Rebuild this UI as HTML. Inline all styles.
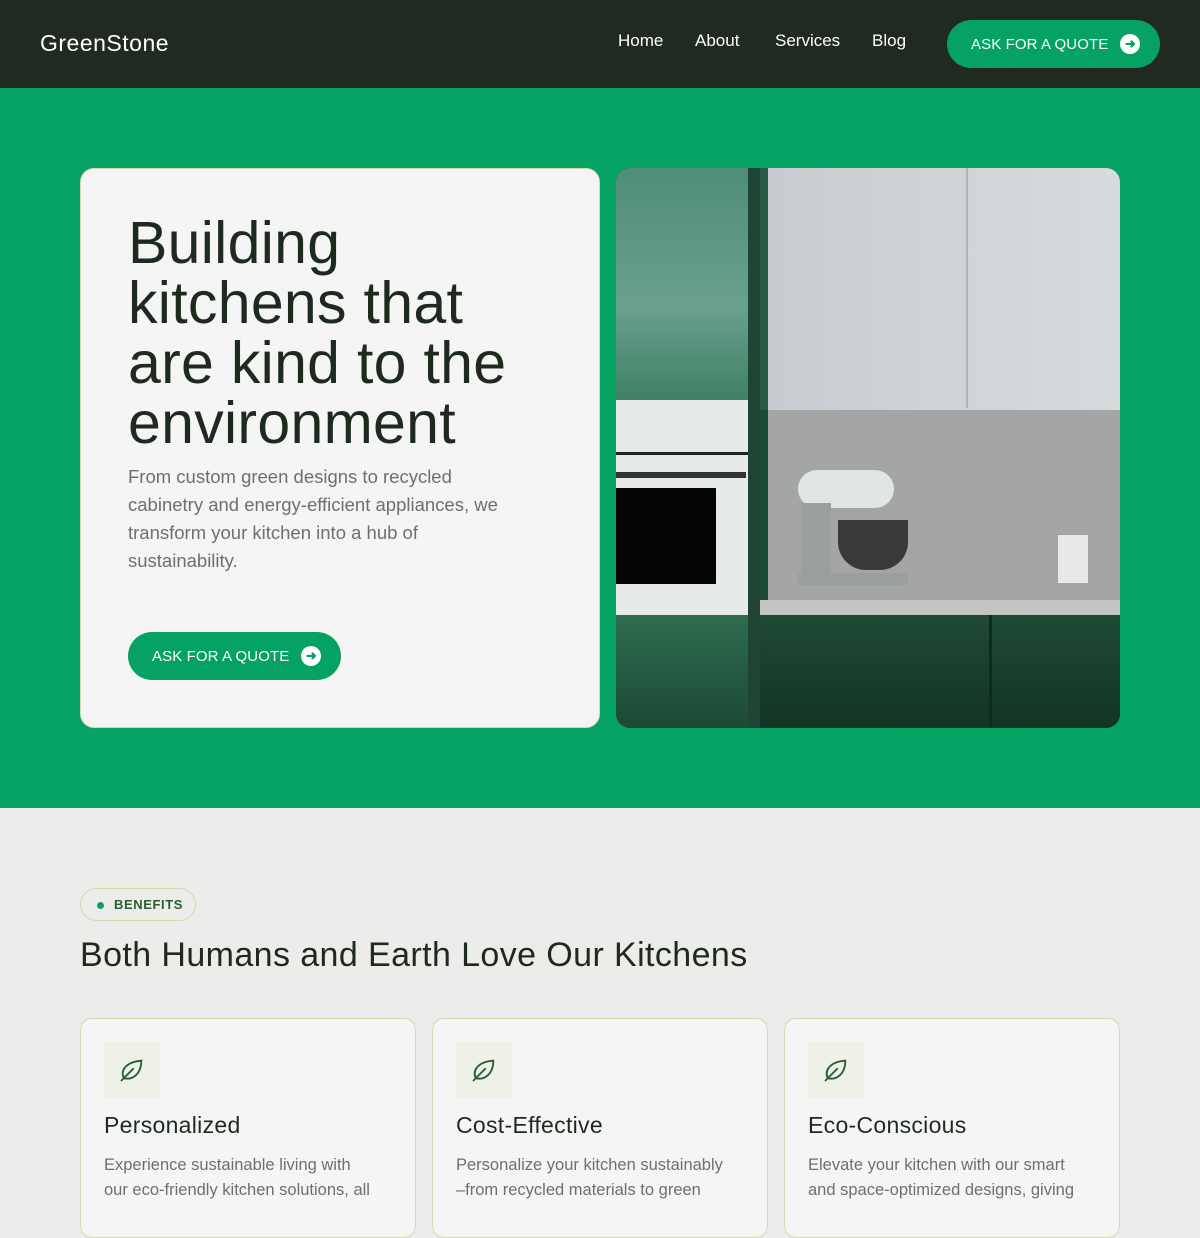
<!DOCTYPE html>
<html><head><meta charset="utf-8"><style>
*{margin:0;padding:0;box-sizing:border-box}
body{width:1200px;height:1200px;overflow:hidden;background:#ececea;font-family:"Liberation Sans",sans-serif}
.nav{height:88px;background:#212a21;position:relative;color:#fff}
.logo{position:absolute;left:40px;top:30px;font-size:23px;letter-spacing:.5px}
.links{position:absolute;top:31px;font-size:17px}
.btn{position:absolute;background:#05a263;color:#fff;border-radius:30px;font-size:15px;letter-spacing:.1px;display:flex;align-items:center}
.arr{width:20px;height:20px;border-radius:50%;background:#fff;margin-left:12px;display:flex;align-items:center;justify-content:center;color:#05a263;font-size:13px;font-weight:bold}
.hero{height:720px;background:#05a263;position:relative}
.card{position:absolute;left:80px;top:80px;width:520px;height:560px;background:#f5f5f5;border:1px solid #cfdcb0;border-radius:14px}
h1{position:absolute;left:47px;top:44px;font-weight:normal;font-size:59px;line-height:60px;color:#1f2a1f;letter-spacing:.3px}
.p{position:absolute;left:47px;top:294px;width:400px;font-size:18.5px;line-height:28px;color:#6d706d}
.img{position:absolute;left:616px;top:80px;width:504px;height:560px;border-radius:14px;overflow:hidden;background:#1d4a35}
.img div{position:absolute}
.sec{position:relative;height:392px}
.pill{position:absolute;left:80px;top:80px;width:116px;height:33px;border:1px solid #cfdcb0;border-radius:17px;font-size:13px;font-weight:bold;color:#2c5e33;letter-spacing:.6px;padding:8px 0 0 33px}
.pill:before{content:"";position:absolute;left:16px;top:13px;width:7px;height:7px;border-radius:50%;background:#05a263}
h2{position:absolute;left:80px;top:128px;font-weight:normal;font-size:34px;color:#1f2a1f;letter-spacing:.4px}
.c{position:absolute;top:210px;width:336px;height:220px;background:#f5f5f5;border:1px solid #cfdcb0;border-radius:12px}
.ic{position:absolute;left:23px;top:23px;width:56px;height:56px;background:#eef1e8;border-radius:3px;display:flex;align-items:center;justify-content:center}
.c h3{position:absolute;left:23px;top:93px;font-weight:normal;font-size:23px;color:#1f2a1f;letter-spacing:.3px}
.c p{position:absolute;left:23px;top:134px;width:272px;font-size:16.5px;line-height:25px;color:#6d706d}
</style></head><body>
<div class="nav">
<div class="logo">GreenStone</div>
<div class="links" style="left:618px">Home</div>
<div class="links" style="left:695px">About</div>
<div class="links" style="left:775px">Services</div>
<div class="links" style="left:872px">Blog</div>
<div class="btn" style="left:947px;top:20px;width:213px;height:48px;padding-left:24px">ASK FOR A QUOTE<span class="arr">➜</span></div>
</div>
<div class="hero">
<div class="card">
<h1>Building<br>kitchens that<br>are kind to the<br>environment</h1>
<div class="p">From custom green designs to recycled cabinetry and energy-efficient appliances, we transform your kitchen into a hub of sustainability.</div>
<div class="btn" style="left:47px;top:463px;width:213px;height:48px;padding-left:24px">ASK FOR A QUOTE<span class="arr">➜</span></div>
</div>
<div class="img">
<div style="left:0;top:0;width:132px;height:232px;background:linear-gradient(180deg,#4f8d77,#6aa08d 60%,#3f8066)"></div>
<div style="left:0;top:232px;width:132px;height:215px;background:#e6eae9"></div>
<div style="left:0;top:284px;width:132px;height:3px;background:#222"></div>
<div style="left:0;top:304px;width:130px;height:6px;background:#333"></div>
<div style="left:0;top:320px;width:100px;height:96px;background:#050505"></div>
<div style="left:0;top:447px;width:132px;height:113px;background:linear-gradient(180deg,#2f6c50,#1c4a35)"></div>
<div style="left:132px;top:0;width:12px;height:560px;background:#1d4434"></div>
<div style="left:144px;top:0;width:8px;height:242px;background:#2a5a45"></div>
<div style="left:152px;top:0;width:352px;height:242px;background:linear-gradient(90deg,#c8ccd0,#d8dbdd)"></div>
<div style="left:350px;top:0;width:2px;height:240px;background:#b0b4b7"></div>
<div style="left:152px;top:242px;width:352px;height:190px;background:#a3a6a5"></div>
<div style="left:144px;top:432px;width:360px;height:15px;background:#c2c4c3"></div>
<div style="left:182px;top:302px;width:96px;height:38px;border-radius:20px;background:#dfe6e4"></div>
<div style="left:185px;top:335px;width:30px;height:82px;background:#9c9fa0"></div>
<div style="left:182px;top:405px;width:110px;height:12px;background:#9c9fa0"></div>
<div style="left:222px;top:352px;width:70px;height:50px;border-radius:0 0 28px 28px;background:#3a3a3a"></div>
<div style="left:442px;top:367px;width:30px;height:48px;background:#e8eaea"></div>
<div style="left:144px;top:447px;width:360px;height:113px;background:linear-gradient(180deg,#1e4a36,#123424)"></div>
<div style="left:373px;top:447px;width:3px;height:113px;background:#0f2a1e"></div>
</div>
</div>
<div class="sec">
<div class="pill">BENEFITS</div>
<h2>Both Humans and Earth Love Our Kitchens</h2>
<div class="c" style="left:80px"><div class="ic"><svg width="28" height="28" viewBox="0 0 24 24" fill="none" stroke="#2c5e33" stroke-width="1.6" stroke-linecap="round"><path d="M3 21 L13 11"/><path d="M5 19 C2 13 6 5 20 4 C20 15 13 21 5 19Z"/></svg></div><h3>Personalized</h3><p>Experience sustainable living with our eco-friendly kitchen solutions, all</p></div>
<div class="c" style="left:432px"><div class="ic"><svg width="28" height="28" viewBox="0 0 24 24" fill="none" stroke="#2c5e33" stroke-width="1.6" stroke-linecap="round"><path d="M3 21 L13 11"/><path d="M5 19 C2 13 6 5 20 4 C20 15 13 21 5 19Z"/></svg></div><h3>Cost-Effective</h3><p>Personalize your kitchen sustainably –from recycled materials to green</p></div>
<div class="c" style="left:784px"><div class="ic"><svg width="28" height="28" viewBox="0 0 24 24" fill="none" stroke="#2c5e33" stroke-width="1.6" stroke-linecap="round"><path d="M3 21 L13 11"/><path d="M5 19 C2 13 6 5 20 4 C20 15 13 21 5 19Z"/></svg></div><h3>Eco-Conscious</h3><p>Elevate your kitchen with our smart and space-optimized designs, giving</p></div>
</div>
</body></html>
